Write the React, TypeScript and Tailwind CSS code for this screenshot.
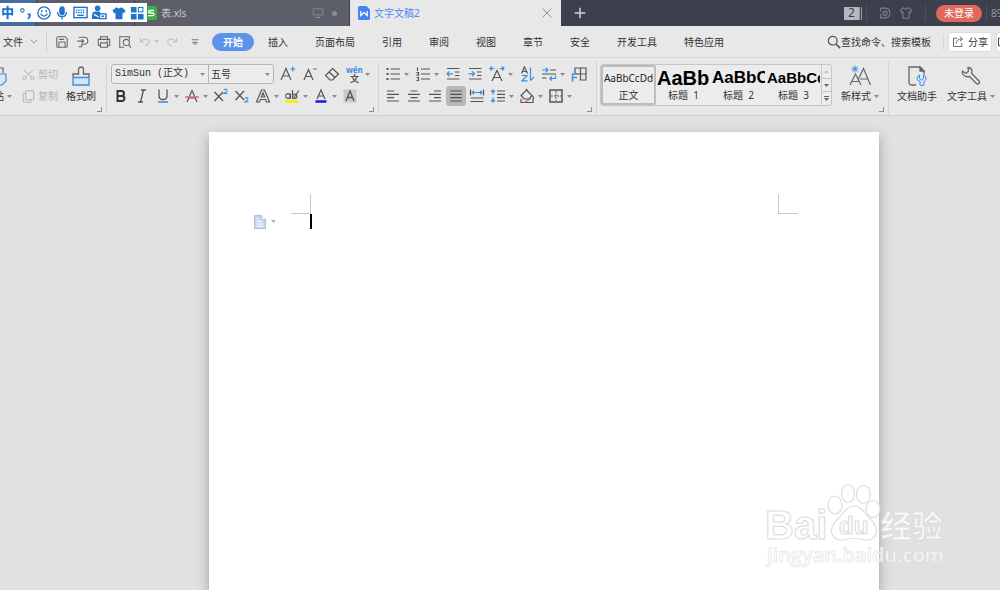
import type { ReactNode } from "react";
import clsx from "clsx";

const BLUE = "#3b8ddd";

function Icon({ children, className = "size-4" }: { children: ReactNode; className?: string }) {
    return (
        <svg viewBox="0 0 16 16" className={clsx("shrink-0", className)} fill="none" stroke="currentColor" strokeWidth="1.2" aria-hidden="true">
            {children}
        </svg>
    );
}

function Caret({ className = "text-[#8a8a8a]" }: { className?: string }) {
    return (
        <svg viewBox="0 0 5 3" className={clsx("h-[3px] w-[5px] shrink-0", className)} aria-hidden="true">
            <path d="M0 0h5L2.5 3z" fill="currentColor" />
        </svg>
    );
}

function Tool({ label, children, split, active }: { label: string; children: ReactNode; split?: boolean; active?: boolean }) {
    return (
        <button aria-label={label} className={clsx("flex h-5 shrink-0 items-center", split ? "w-6 justify-between" : active ? "-mx-0.5 w-5 justify-center rounded-[3px] bg-[#b9b9b9]" : "w-4 justify-center")}>
            <Icon>{children}</Icon>
            {split && <Caret />}
        </button>
    );
}

function Group({ children, className, launcher = true }: { children: ReactNode; className?: string; launcher?: boolean }) {
    return (
        <div className={clsx("relative flex h-[52px] shrink-0 border-r border-[#d3d3d3] pt-0.5", className)}>
            {children}
            {launcher && (
                <button aria-label="更多设置" className="absolute right-1 bottom-0.5 size-[5px] border-r border-b border-[#8f8f8f]" />
            )}
        </div>
    );
}

function BigTool({ label, children, caret }: { label: string; children: ReactNode; caret?: boolean }) {
    return (
        <button className="flex shrink-0 flex-col items-center">
            <span className="flex h-6 items-center">{children}</span>
            <span className="flex h-4 items-center gap-[3px] whitespace-nowrap">
                {label}
                {caret && <Caret />}
            </span>
        </button>
    );
}

function TitleBar() {
    return (
        <header className="relative flex h-[26px] bg-[#3c404d]">
            <div className="w-[37px] shrink-0 border-r border-[#3c404d] bg-[#4a6b9f]" />
            <div className="w-[98px] shrink-0 border-r border-[#3c404d] bg-[#5c5e69]" />
            <div className="flex w-[215px] shrink-0 items-center border-r border-[#3c404d] bg-[#5c5e69] pr-3 pl-[10px] text-[#c8c9cd]">
                <svg viewBox="0 0 12 14" className="mr-1 h-[14px] w-3" aria-hidden="true">
                    <rect width="12" height="14" rx="2" fill="#3fae49" />
                    <path d="M9 4.5H5.2Q3.5 4.5 3.5 5.8T5.2 7h2.2Q9 7 9 8.3T7.4 9.6H3.2" fill="none" stroke="#fff" strokeWidth="1.3" />
                </svg>
                <span className="flex-1">表.xls</span>
                <Icon className="mr-2 size-3 text-[#8b8d96]">
                    <path d="M1.5 2.5h13v8h-13zM8 10.500v3M4.500 14h7" />
                </Icon>
                <span className="size-[5px] rounded-full bg-[#8b8d96]" />
            </div>
            <div className="flex w-[211px] shrink-0 items-center bg-[#e8e8e8] px-2 text-[#4c88ee]">
                <svg viewBox="0 0 12 14" className="mr-1 h-[14px] w-3" aria-hidden="true">
                    <path d="M1.500 0H8.500L12 3.500v9a1.500 1.500 0 0 1-1.500 1.500h-9A1.500 1.500 0 0 1 0 12.500v-11A1.500 1.500 0 0 1 1.500 0z" fill="#4584ee" />
                    <path d="M2.800 5v4.500L6 6.500l3.200 3V5" fill="none" stroke="#fff" strokeWidth="1.200" />
                </svg>
                <span className="flex-1">文字文稿2</span>
                <button aria-label="关闭" className="text-[#8a8a8a]">
                    <Icon className="size-3">
                        <path d="M2 2l12 12M14 2L2 14" />
                    </Icon>
                </button>
            </div>
            <button aria-label="新建" className="w-10 shrink-0 pl-[13px] text-[#d0d2d6]">
                <Icon className="size-3">
                    <path d="M8 1v14M1 8h14" strokeWidth="2" />
                </Icon>
            </button>
            <div className="flex min-w-0 flex-1 items-center justify-end overflow-hidden text-[#7d808a]">
                <span className="flex h-[13px] w-[15px] items-center justify-center rounded-[1px] bg-[#b6b8bd] text-xs text-[#3c404d]">2</span>
                <span className="h-[13px] w-[3px] border-x border-[#9a9ca3]" />
                <span className="ml-1 h-4 w-px bg-[#50535f]" />
                <button aria-label="文档" className="ml-3">
                    <Icon className="size-3">
                        <path d="M2 1.500h7Q14.500 2.500 14.500 8T9 14.500H2V9M2 1.500V6" strokeWidth="1.400" />
                        <circle cx="8" cy="8.500" r="3.300" />
                        <path d="M8 5.500l2 3-2 2-2-2z" />
                    </Icon>
                </button>
                <button aria-label="皮肤" className="ml-2">
                    <Icon className="size-[14px]">
                        <path d="M5.500 2L1.500 5l1.800 3L4.500 7v7h7V7l1.200 1 1.800-3-4-3Q8 5 5.500 2z" />
                    </Icon>
                </button>
                <span className="ml-3 h-4 w-px bg-[#50535f]" />
                <button className="ml-[10px] h-[17px] shrink-0 rounded-full bg-[#de695c] px-2 text-white">未登录</button>
                <span className="ml-1 h-4 w-px bg-[#50535f]" />
                <span className="ml-1 w-[9px] overflow-hidden text-[#989aa2]">89</span>
            </div>
            <InputMethodBar />
        </header>
    );
}

// floating input method bar, sits on top of the tabs
function InputMethodBar() {
    return (
        <div className="absolute top-[3px] left-0 flex h-[19px] w-[147px] items-center justify-between bg-white pr-[3px] pl-px text-[#1f74cc]">
            <button className="text-[13px] leading-none font-black">中</button>
            <Icon className="size-[14px]">
                <circle cx="5" cy="5" r="2" />
                <path d="M11 9.500h2.500v2q0 2-2.500 3" strokeWidth="2" />
            </Icon>
            <Icon className="size-[14px]">
                <circle cx="8" cy="8" r="7" strokeWidth="1.500" />
                <path d="M5.500 4.500v2.500M10.500 4.500v2.500M4 9q4 5 8 0" strokeWidth="1.500" />
            </Icon>
            <Icon className="size-[14px]">
                <rect x="5.500" y="1" width="5" height="9" rx="2.500" fill="currentColor" />
                <path d="M3 7q0 5 5 5t5-5M8 12v3.500" strokeWidth="1.600" />
            </Icon>
            <Icon className="size-[15px]">
                <rect x="1" y="2.500" width="14" height="11" strokeWidth="1.500" />
                <path d="M3 5.500h10M3 8h10" strokeDasharray="1.500 1" strokeWidth="1.500" />
                <path d="M4.500 11h7" strokeWidth="1.500" />
            </Icon>
            <Icon className="size-[15px]">
                <circle cx="6" cy="3.500" r="3" fill="currentColor" stroke="none" />
                <path d="M0 15V11q0-4 4-4h4l2 3v5z" fill="currentColor" stroke="none" />
                <path d="M2 10l6 3" stroke="#fff" />
                <path d="M8 9.500h7v5H8zM10 12h3" strokeWidth="1.500" fill="#fff" />
            </Icon>
            <Icon className="size-[14px]">
                <path d="M5 1.500L0.500 5l2 3.500L4 7.500V15h8V7.500l1.500 1 2-3.500L11 1.500Q8 4 5 1.500z" fill="currentColor" stroke="none" />
            </Icon>
            <Icon className="size-[14px]">
                <path d="M1 1h6.500v6.500H1zM1 9h6.500v6.500H1zM9 9h6.500v6.500H9z" fill="currentColor" stroke="none" />
                <rect x="9.700" y="1.700" width="5" height="5" />
            </Icon>
        </div>
    );
}

const menus = ["插入", "页面布局", "引用", "审阅", "视图", "章节", "安全", "开发工具", "特色应用"];

function MenuBar() {
    return (
        <nav className="flex h-8 items-center overflow-hidden border-b border-[#dadada] pl-[3px]">
            <button className="flex shrink-0 items-center gap-[7px]">
                文件
                <svg viewBox="0 0 8 5" className="h-[5px] w-2" fill="none" stroke="#9a9a9a" aria-hidden="true">
                    <path d="M0.500 0.500L4 4l3.500-3.500" />
                </svg>
            </button>
            <span className="mx-2 h-5 w-px shrink-0 bg-[#cfcfcf]" />
            <div className="flex shrink-0 items-center gap-[7px] text-[#666]">
                <button aria-label="保存">
                    <Icon className="size-[14px]">
                        <path d="M2 3.500Q2 2 3.500 2h8L14 4.500v8Q14 14 12.500 14h-9Q2 14 2 12.500zM4.500 14V8h7v6M4.500 5h6" />
                    </Icon>
                </button>
                <button aria-label="输出为PDF">
                    <Icon className="size-[14px]">
                        <path d="M3 2.500h6.500a4 4 0 0 1 0 8H6.500V14M1.500 7h7M6.500 4.800L8.800 7 6.500 9.200M3 13.500h3.500" />
                    </Icon>
                </button>
                <button aria-label="打印">
                    <Icon className="size-[14px]">
                        <path d="M4 5V2h8v3M4 12H1.500V5h13v7H12M4 9h8v5H4zM11 7h1.500" />
                    </Icon>
                </button>
                <button aria-label="打印预览">
                    <Icon className="size-[14px]">
                        <path d="M13 5V2H2v12h5" />
                        <circle cx="9.500" cy="8.500" r="3.500" />
                        <path d="M12 11l3 3.500" />
                    </Icon>
                </button>
                <button aria-label="撤销" className="flex w-5 items-center justify-between text-[#bdbdbd]">
                    <Icon className="size-3">
                        <path d="M2 3v5h5M2.500 7.500Q7 2.500 11.500 4.500T11 12l-3 1.500" strokeWidth="1.400" />
                    </Icon>
                    <Caret className="text-[#c4c4c4]" />
                </button>
                <button aria-label="恢复" className="text-[#bdbdbd]">
                    <Icon className="size-3">
                        <path d="M14 3v5H9M13.500 7.500Q9 2.500 4.500 4.500T5 12l3 1.500" strokeWidth="1.400" />
                    </Icon>
                </button>
                <button aria-label="自定义快速访问" className="ml-1">
                    <Icon className="size-3">
                        <path d="M3.500 5h9M5 8.500h6l-3 3z" />
                    </Icon>
                </button>
            </div>
            <button className="ml-[11px] h-[18px] shrink-0 rounded-full bg-[#5d93ea] px-[11px] font-bold text-white">开始</button>
            <div className="ml-[14px] flex shrink-0 gap-[27px]">
                {menus.map((m) => (
                    <button key={m} className="whitespace-nowrap">{m}</button>
                ))}
            </div>
            <div className="flex flex-1 items-center justify-end">
                <label htmlFor="search" className="text-[#555]">
                    <Icon className="size-[14px]">
                        <circle cx="6.500" cy="6.500" r="5" strokeWidth="1.400" />
                        <path d="M10 10l5 5" strokeWidth="1.800" />
                    </Icon>
                </label>
                <input id="search" aria-label="搜索" placeholder="查找命令、搜索模板" className="w-[102px] bg-transparent outline-none placeholder:text-[#333]" />
                <span className="mr-1 h-4 w-px shrink-0 bg-[#d6d6d6]" />
                <button className="flex h-5 w-[44px] shrink-0 items-center justify-center gap-1 rounded-[3px] border border-[#dcdcdc] bg-white">
                    <Icon className="size-3 text-[#666]">
                        <path d="M7 3H2v11h11V9.500M5.500 10q0-6 8-6M10.500 1l3.500 3-3.500 3" strokeWidth="1.300" />
                    </Icon>
                    分享
                </button>
                <button aria-label="批注" className="ml-1 h-5 w-1 shrink-0 overflow-hidden rounded-l-[3px] border border-r-0 border-[#dcdcdc] bg-white">
                    <Icon className="size-3">
                        <path d="M2 3h12v10H2z" />
                    </Icon>
                </button>
            </div>
        </nav>
    );
}

function ClipboardGroup() {
    return (
        <Group className="w-[107px]">
            <button className="flex w-3 flex-col items-end overflow-hidden">
                <span className="flex h-6 items-center pr-[5px]">
                    <svg viewBox="0 0 20 20" className="size-5 shrink-0" fill="none" stroke="#666" strokeWidth="1.200" aria-hidden="true">
                        <path d="M3 18V2h6M10 7V2h6v5" />
                        <path d="M9 8h10v7l-4 4H9z" fill="#d8e6f6" stroke={BLUE} />
                    </svg>
                </span>
                <span className="flex h-4 items-center gap-[3px] whitespace-nowrap">
                    粘贴
                    <Caret />
                </span>
            </button>
            <div className="ml-[10px] flex flex-col gap-0.5 text-[#b4b4b4]">
                <button className="flex h-5 items-center gap-[3px]">
                    <Icon className="size-[13px]">
                        <path d="M2 2l9.500 9M14 2L4.500 11" />
                        <circle cx="3" cy="12.500" r="2" />
                        <circle cx="13" cy="12.500" r="2" />
                    </Icon>
                    剪切
                </button>
                <button className="flex h-5 items-center gap-[3px]">
                    <Icon className="size-[13px]">
                        <path d="M4.500 1h10v11h-10zM4.500 4H1.500v11h9.500v-3" />
                    </Icon>
                    复制
                </button>
            </div>
            <div className="ml-2">
                <BigTool label="格式刷">
                    <svg viewBox="0 0 20 22" className="h-[22px] w-5" fill="none" stroke="#666" strokeWidth="1.300" aria-hidden="true">
                        <path d="M2 12V9h5.500V4.500Q7.500 2 10 2t2.500 2.500V9H18v3" />
                        <path d="M2 12.500h16V20H2z" fill="#d5e5f5" stroke={BLUE} />
                    </svg>
                </BigTool>
            </div>
        </Group>
    );
}

function FontGroup() {
    return (
        <Group className="w-[272px] flex-col gap-0.5 pl-1">
            <div className="flex h-5 items-center gap-[6px] text-[#555]">
                <div className="flex h-5 rounded-[3px] border border-[#b5b5b5] bg-[#ececec] text-[#333]">
                    <div className="relative flex items-center border-r border-[#b5b5b5]">
                        <select aria-label="字体" className="w-24 appearance-none bg-transparent pl-[3px] font-['Liberation_Mono','Noto_Sans_CJK_SC',monospace] outline-none">
                            <option>SimSun (正文)</option>
                        </select>
                        <Caret className="pointer-events-none absolute right-[3px] text-[#8a8a8a]" />
                    </div>
                    <div className="relative flex items-center">
                        <select aria-label="字号" className="w-16 appearance-none bg-transparent pl-0.5 outline-none">
                            <option>五号</option>
                        </select>
                        <Caret className="pointer-events-none absolute right-[3px] text-[#8a8a8a]" />
                    </div>
                </div>
                <Tool label="增大字号">
                    <path d="M1 14L6 2.500 11 14M3 10h6" />
                    <path d="M12.800 0.500v5M10.300 3h5" stroke={BLUE} />
                </Tool>
                <Tool label="减小字号">
                    <path d="M2 14L6.500 3.500 11 14M4 10.500h5.500" />
                    <path d="M11 3h4" stroke={BLUE} />
                </Tool>
                <Tool label="清除格式">
                    <path d="M8.500 2.500l6 5.500-6 6H6L1.500 9.500zM5 6l6 5.500" />
                </Tool>
                <button aria-label="拼音指南" className="flex h-5 w-6 items-center justify-between">
                    <span className="flex flex-col items-center">
                        <span className="text-[8px] leading-[9px] font-bold text-[#3b8ddd]">wén</span>
                        <span className="text-[9px] leading-[9px] font-bold">文</span>
                    </span>
                    <Caret />
                </button>
            </div>
            <div className="flex h-5 items-center gap-[5px] pl-0.5 text-[#555]">
                <Tool label="加粗">
                    <path d="M4.500 3h4a2.400 2.400 0 0 1 0 5h-4zM4.500 8H9a2.500 2.500 0 0 1 0 5H4.500z" stroke="#333" strokeWidth="2" />
                </Tool>
                <Tool label="倾斜">
                    <path d="M7 2h5M4 14h5M9.500 2L6.500 14" strokeWidth="1.300" />
                </Tool>
                <Tool label="下划线" split>
                    <path d="M4 1.500V8q0 3.500 4 3.500T12 8V1.500" strokeWidth="1.300" />
                    <path d="M3 14h10" stroke={BLUE} strokeWidth="1.500" />
                </Tool>
                <Tool label="删除线" split>
                    <path d="M3 14L8 2.500 13 14M5 10h6" />
                    <path d="M1 9h14" stroke="#e0645f" strokeWidth="1.400" />
                </Tool>
                <Tool label="上标">
                    <path d="M1.500 4l8.500 9M10 4l-8.500 9" strokeWidth="1.300" />
                    <path d="M11 2.500q0-1.500 1.500-1.500T14 2.500Q14 3.500 11 5.500h3.500" stroke={BLUE} strokeWidth="1.100" />
                </Tool>
                <Tool label="下标">
                    <path d="M1.500 3l8.500 9M10 3l-8.500 9" strokeWidth="1.300" />
                    <path d="M11 11q0-1.500 1.500-1.500T14 11q0 1-3 3h3.500" stroke={BLUE} strokeWidth="1.100" />
                </Tool>
                <Tool label="文字效果" split>
                    <path d="M1.500 14L6.500 2h3l5 12h-3l-1-2.500h-5L4.500 14zM6.300 9h3.400L8 4.800z" />
                </Tool>
                <Tool label="突出显示" split>
                    <circle cx="4" cy="8" r="2.300" />
                    <path d="M6.300 5.500V11M8.500 2v9M15 2.500L10 9.500" />
                    <circle cx="10.700" cy="8.200" r="2.200" />
                    <path d="M1 13.500h13" stroke="#f8ee00" strokeWidth="2.600" />
                </Tool>
                <Tool label="字体颜色" split>
                    <path d="M4 11L8 2l4 9M5.300 8h5.400" />
                    <path d="M2.500 13.500h11" stroke="#0b12ee" strokeWidth="2.400" />
                </Tool>
                <Tool label="字符底纹">
                    <path d="M1.500 1.500h13v13h-13z" fill="#cacaca" stroke="none" />
                    <path d="M4 13L8 3l4 10M5.300 9.500h5.400" strokeWidth="1.300" />
                </Tool>
            </div>
        </Group>
    );
}

function ParagraphGroup() {
    return (
        <Group className="w-[218px] flex-col gap-0.5 pl-[6px]">
            <div className="flex h-5 gap-[6px] text-[#555]">
                <Tool label="项目符号" split>
                    <path d="M5.500 3H15M5.500 8H15M5.500 13H15" />
                    <path d="M1.500 3h2M1.500 8h2M1.500 13h2" strokeWidth="2.200" />
                </Tool>
                <Tool label="编号" split>
                    <path d="M6 3h9M6 8h9M6 13h9M2.500 1.500v3.500M1.500 6.700h2v2.500h-2M1.500 11.500h2v3h-2" />
                </Tool>
                <Tool label="减少缩进">
                    <path d="M2 2.500h12.500M10 6h4.500M10 9.500h4.500M2 13h12.500" />
                    <path d="M8 7.800H2M4.500 5.300L2 7.800l2.500 2.500" stroke={BLUE} />
                </Tool>
                <Tool label="增加缩进">
                    <path d="M2 2.500h12.500M10 6h4.500M10 9.500h4.500M2 13h12.500" />
                    <path d="M1.500 7.800h6M5 5.300l2.500 2.500L5 10.300" stroke={BLUE} />
                </Tool>
                <Tool label="中文版式" split>
                    <path d="M3 15L8 4.500 13 15M5 11.500h6" />
                    <path d="M5.500 2.500H1M3 0.500l-2 2 2 2M10.500 2.500H15M13 0.500l2 2-2 2" stroke={BLUE} />
                </Tool>
                <Tool label="排序">
                    <path d="M2.500 7.500L5.500 1l3 6.500M3.500 5.500h4" />
                    <path d="M3 9.500h5L3 14.800h5.500M11.500 1.500v13M15 11l-3.500 3.500" stroke={BLUE} />
                </Tool>
                <Tool label="制表位" split>
                    <path d="M9 4h6M1 8h14M1 12h4.500" />
                    <path d="M1 4h6M4.700 1.800L7 4 4.700 6.200M14.500 9.500v3H9M11 10.300l-2.200 2.200L11 14.700" stroke={BLUE} />
                </Tool>
                <Tool label="显示编辑标记">
                    <path d="M4 7V2h11v12H8.500M4 8h11M9.500 2v12" />
                    <path d="M6.500 8H1.500v7.500M1.500 11.500H6" stroke={BLUE} strokeWidth="1.400" />
                </Tool>
            </div>
            <div className="flex h-5 gap-[5px] text-[#555]">
                <Tool label="左对齐">
                    <path d="M2 3h7M2 6.300h12M2 9.700h7M2 13h12" />
                </Tool>
                <Tool label="居中">
                    <path d="M4.500 3h7M2 6.300h12M4.500 9.700h7M2 13h12" />
                </Tool>
                <Tool label="右对齐">
                    <path d="M7 3h7M2 6.300h12M7 9.700h7M2 13h12" />
                </Tool>
                <Tool label="两端对齐" active>
                    <path d="M2 3h12M2 6.300h12M2 9.700h12M2 13h12" />
                </Tool>
                <Tool label="分散对齐">
                    <path d="M1.500 1.500v6M14.500 1.500v6M1.500 10h13M1.500 13.500h13" />
                    <path d="M3 4.500h10M5 2.700L3 4.500l2 1.800M11 2.700l2 1.800-2 1.800" stroke={BLUE} />
                </Tool>
                <Tool label="行距" split>
                    <path d="M7 3h8M7 6.300h8M7 9.700h8M7 13h8" />
                    <path d="M3 2v4.500M3 9.500V14M1 4l2-2 2 2M1 12l2 2 2-2" stroke={BLUE} />
                </Tool>
                <Tool label="底纹颜色" split>
                    <path d="M2 7.500L7.500 2l5.500 5.500-3 3.500H5zM2 11v3.500h12V11M7 1l2 2M13 7.500q2.500 2 1 4" />
                    <path d="M5 14.500l7-4" stroke="#e0645f" />
                </Tool>
                <Tool label="边框" split>
                    <path d="M2 2h12v12H2z" strokeWidth="1.500" />
                    <path d="M8 3v10M3 8h10" strokeDasharray="2 1" strokeWidth="1" />
                </Tool>
            </div>
        </Group>
    );
}

const headings = [
    { name: "标题 1", sample: "AaBb", size: "text-[20px]" },
    { name: "标题 2", sample: "AaBbC", size: "text-[17px]" },
    { name: "标题 3", sample: "AaBbCc", size: "text-[15px]" },
];

function StylesGroup() {
    return (
        <Group className="w-[292px] gap-[9px] pl-[3px]">
            <div className="flex h-[42px] overflow-hidden rounded-[3px] border border-[#c6c6c6] bg-[#ececec]">
                <button className="flex w-[55px] flex-col items-center justify-end rounded-[2px] border-2 border-[#bcbcbc]">
                    <span className="font-['Noto_Sans',sans-serif] leading-[18px] text-[#222]">AaBbCcDd</span>
                    <span className="leading-4">正文</span>
                </button>
                {headings.map((h) => (
                    <button key={h.name} className="flex w-[55px] flex-col items-center justify-end border-b-2 border-transparent px-px">
                        <span className={clsx("w-full overflow-hidden text-left font-['Liberation_Sans',sans-serif] leading-[18px] font-bold whitespace-nowrap text-black", h.size)}>
                            {h.sample}
                        </span>
                        <span className="leading-4 whitespace-pre">{h.name.replace(" ", "  ")}</span>
                    </button>
                ))}
                <div className="flex w-[10px] flex-col divide-y divide-[#c6c6c6] border-l border-[#c6c6c6]">
                    <button aria-label="上一行" className="flex flex-1 items-center justify-center">
                        <Caret className="rotate-180 text-[#c4c4c4]" />
                    </button>
                    <button aria-label="下一行" className="flex flex-1 items-center justify-center">
                        <Caret className="text-[#666]" />
                    </button>
                    <button aria-label="更多样式" className="flex flex-1 flex-col items-center justify-center gap-px">
                        <span className="h-px w-[5px] bg-[#666]" />
                        <Caret className="text-[#666]" />
                    </button>
                </div>
            </div>
            <BigTool label="新样式" caret>
                <svg viewBox="0 0 22 22" className="size-[22px]" fill="none" stroke="#666" strokeWidth="1.200" aria-hidden="true">
                    <path d="M1 20L6.500 9 12 20M3 16.500h7M9 15l5.500-11.500L21.500 20M11 14h8" />
                    <path d="M6 0.500v7M2.500 4h7M3.500 1.500l5 5M8.500 1.500l-5 5" stroke={BLUE} strokeWidth="1" />
                </svg>
            </BigTool>
        </Group>
    );
}

function Ribbon() {
    return (
        <section className="flex h-[58px] overflow-hidden border-b border-[#cfcfcf] pt-1 shadow-[0_1px_2px_rgba(0,0,0,0.12)]">
            <ClipboardGroup />
            <FontGroup />
            <ParagraphGroup />
            <StylesGroup />
            <div className="flex gap-[10px] pt-0.5 pl-2">
                <BigTool label="文档助手">
                    <svg viewBox="0 0 20 22" className="h-[22px] w-5" fill="none" stroke="#666" strokeWidth="1.300" aria-hidden="true">
                        <path d="M9 20H4.500Q2 20 2 17.500V2h11l4 4v3.500" />
                        <path d="M13 2v4h4z" fill="#555" />
                        <path d="M12.500 10v3.500l2 1.500 2-1.500V10q2.500 1.200 2.500 3.500 0 2-2 3V20q-2.500 1.500-4 0v-3.500q-3-1-3-3t2.500-3.500z" fill="#d5e5f5" stroke={BLUE} strokeWidth="1" />
                    </svg>
                </BigTool>
                <BigTool label="文字工具" caret>
                    <svg viewBox="0 0 20 20" className="size-5" fill="none" stroke="#666" strokeWidth="1.300" aria-hidden="true">
                        <path d="M7 1.500Q10.500 1.500 11 5l-0.300 2.500 7.300 7.500q1 1.200 0 2.500-1.300 1-2.500 0L8.500 10.500Q4 11.500 2 8.500 1 7 1.500 5l3.500 2.500L7.500 5z" />
                    </svg>
                </BigTool>
            </div>
        </section>
    );
}

function Watermark() {
    return (
        <svg viewBox="0 0 184 92" className="pointer-events-none absolute right-[52px] bottom-[14px] h-[92px] w-[184px]" fill="#fff" fillOpacity="0.75" stroke="#dedede" strokeWidth="1.200" aria-label="Baidu经验">
            <ellipse cx="71" cy="21" rx="7" ry="9" />
            <ellipse cx="84" cy="9.500" rx="6.500" ry="9" />
            <ellipse cx="99.500" cy="10.500" rx="7" ry="9" />
            <ellipse cx="109" cy="25" rx="7" ry="8.500" />
            <path d="M90 22Q96 22 101 29 104 33 109 38 114 44 112 50 109 57 101 56 95 54.500 90 54.500T79 56Q71 57 68 50 66 44 71 38 76 33 79 29 84 22 90 22z" />
            <g fontFamily="'Liberation Sans', sans-serif" fontWeight="bold">
                <text x="1" y="55" fontSize="40">Bai</text>
                <text x="75" y="50" fontSize="24">du</text>
            </g>
            <text x="117" y="53" fontSize="31" fontFamily="'Noto Sans CJK SC', sans-serif" fontWeight="bold" fillOpacity="0.85">经验</text>
            <text x="3" y="78" fontSize="20" fontFamily="'Open Sans', sans-serif" fontWeight="600" strokeWidth="0.600">jingyan.baidu.com</text>
        </svg>
    );
}

export default function App() {
    return (
        <div lang="zh-CN" className="relative flex min-h-screen flex-col overflow-hidden bg-[#e8e8e8] font-['Noto_Sans','Noto_Sans_CJK_SC',sans-serif] text-[10px] leading-4 text-[#333]">
            <TitleBar />
            <MenuBar />
            <Ribbon />
            <main className="flex flex-1 overflow-hidden bg-[#e1e1e1] pt-4 pr-[121px] pl-[209px]">
                <article className="flex-1 bg-white pt-[62px] shadow-[0_5px_12px_rgba(0,0,0,0.3)]">
                    <div className="flex justify-between pr-[81px] pl-[82px]">
                        <span className="h-5 w-5 border-r border-b border-[#c9c9c9]" />
                        <span className="h-5 w-5 border-b border-l border-[#c9c9c9]" />
                    </div>
                    <div className="flex items-center pl-[45px]">
                        <button aria-label="文档选项" className="flex w-[22px] items-center justify-between">
                            <svg viewBox="0 0 12 14" className="h-[14px] w-3" fill="#c5d5ef" stroke="#aac1e6" aria-hidden="true">
                                <path d="M0.500 0.500h7l4 4v9h-11z" />
                                <path d="M7.500 0.500v4h4" fill="#fff" />
                                <path d="M2.500 4h3M2.500 6.500h6M2.500 9h7M2.500 11.300h7" stroke="#fff" />
                            </svg>
                            <Caret className="text-[#b0b0b0]" />
                        </button>
                        <span className="ml-[34px] h-[15px] w-0.5 bg-black" />
                    </div>
                </article>
            </main>
            <Watermark />
        </div>
    );
}
